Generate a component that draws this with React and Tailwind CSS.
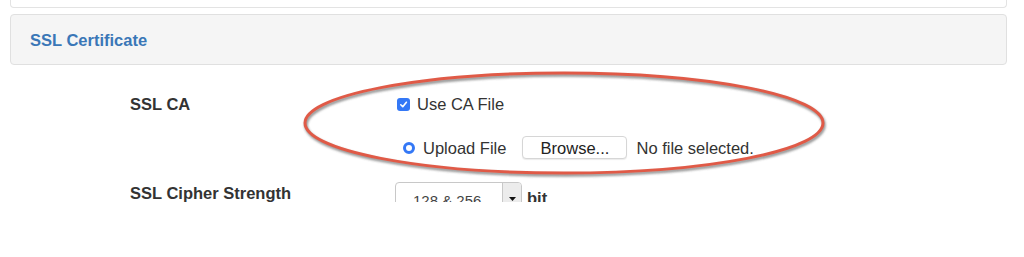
import React from "react";

export default function App() {
  return (
    <div
      className="relative w-[1024px] h-[257px] overflow-hidden bg-white text-[#333]"
      style={{ fontFamily: '"Liberation Sans", Arial, Helvetica, sans-serif' }}
    >
      {/* previous card bottom */}
      <div className="ml-[10px] w-[997px] h-[8px] border border-t-0 border-[#e3e3e3] rounded-b-[4px]" />

      {/* panel heading */}
      <div className="ml-[10px] mt-[6px] w-[997px] h-[51px] bg-[#f5f5f5] border border-[#e0e0e0] rounded-[4px] flex items-center pl-[19px]">
        <span className="text-[16.5px] font-bold text-[#3a77b7] leading-[20px] mt-[1px]">
          SSL Certificate
        </span>
      </div>

      {/* form */}
      <div className="h-[137px] overflow-hidden flex flex-col">
        {/* row 1 */}
        <div className="flex mt-[29px] h-[20px]">
          <div className="w-[396px] shrink-0 pl-[130px] text-[16.5px] font-bold leading-[20px] whitespace-nowrap">SSL CA</div>
          <div className="flex items-center">
            <span className="ml-[1px] w-[13px] h-[13px] rounded-[3px] bg-[#3478f6] flex items-center justify-center">
              <svg width="9" height="9" viewBox="0 0 10 10">
                <path d="M2 5.3 L4.2 7.5 L8.2 2.5" fill="none" stroke="white" strokeWidth="1.8" strokeLinecap="round" strokeLinejoin="round" />
              </svg>
            </span>
            <span className="ml-[7px] text-[16.5px] leading-[20px] whitespace-nowrap">Use CA File</span>
          </div>
        </div>

        {/* row 2 */}
        <div className="flex mt-[22px] h-[23px]">
          <div className="w-[396px] shrink-0" />
          <div className="flex items-center">
            <span className="ml-[7px] w-[12px] h-[12px] rounded-full border-[3.5px] border-[#3478f6] bg-white" />
            <span className="ml-[8px] text-[16.5px] leading-[20px] whitespace-nowrap">Upload File</span>
            <span className="ml-[16px] w-[105px] h-[23px] border border-[#d6d6d6] rounded-[4px] bg-white shadow-[0_1px_1px_rgba(0,0,0,0.08)] flex items-center justify-center text-[16.5px] leading-[20px] text-[#222]">
              Browse...
            </span>
            <span className="ml-[9px] text-[16.5px] leading-[20px] whitespace-nowrap">No file selected.</span>
          </div>
        </div>

        {/* row 3 */}
        <div className="flex mt-[23px]">
          <div className="w-[395px] shrink-0 pl-[130px] mt-[1px] text-[16.5px] font-bold leading-[20px] whitespace-nowrap">SSL Cipher Strength</div>
          <div className="flex items-start">
            <div className="w-[127px] h-[34px] border border-[#c8c8c8] rounded-[4px] bg-white flex overflow-hidden">
              <span className="flex-1 pl-[17px] pt-[9px] text-[15px] leading-[18px] text-[#444] whitespace-nowrap">128 &amp; 256</span>
              <span className="w-[19px] h-full bg-[#ececec] border-l border-[#c8c8c8] flex justify-center pt-[14px]">
                <svg width="7" height="5" viewBox="0 0 7 5">
                  <path d="M0 0 L7 0 L3.5 4 Z" fill="#111" />
                </svg>
              </span>
            </div>
            <span className="ml-[5px] mt-[6px] text-[16.5px] font-bold leading-[20px]">bit</span>
          </div>
        </div>
      </div>

      {/* red annotation ellipse */}
      <svg className="absolute left-0 top-0 pointer-events-none" width="1024" height="257">
        <defs>
          <filter id="blur" x="-10%" y="-20%" width="120%" height="140%">
            <feGaussianBlur stdDeviation="1.2" />
          </filter>
        </defs>
        <ellipse cx="565" cy="125" rx="259" ry="50" fill="none" stroke="#555" strokeOpacity="0.6" strokeWidth="3.5" filter="url(#blur)" />
        <ellipse cx="564" cy="123" rx="259" ry="50" fill="none" stroke="#e05a47" strokeWidth="3" />
      </svg>
    </div>
  );
}
